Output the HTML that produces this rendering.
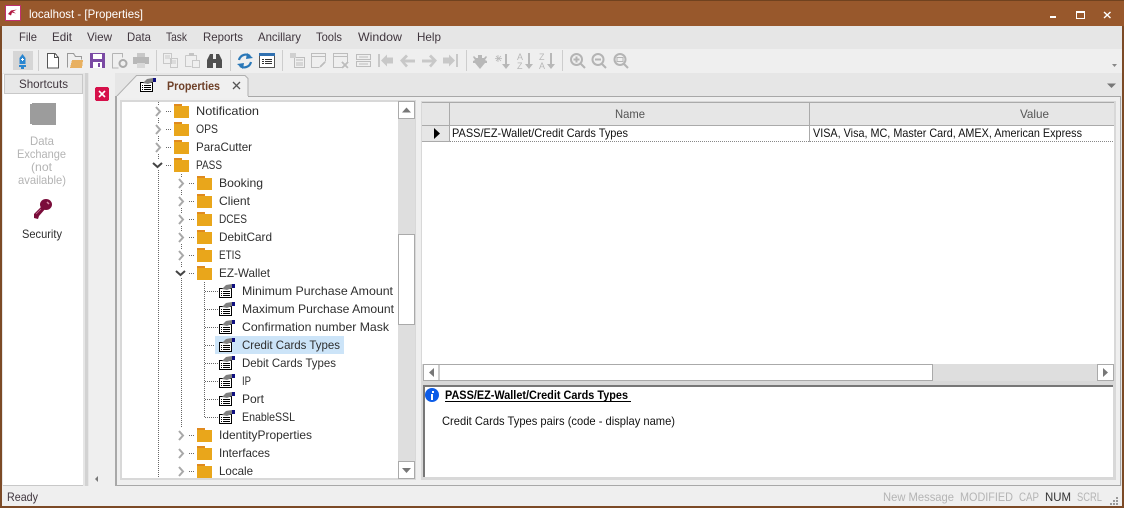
<!DOCTYPE html>
<html><head><meta charset="utf-8"><title>localhost - [Properties]</title>
<style>
html,body{margin:0;padding:0;background:#e6e6e6;overflow:hidden}
svg{display:block;font-family:"Liberation Sans",sans-serif;font-size:12px}
.d{fill:#2e2e2e}.g{fill:#b4b4b4}.m{fill:#40363e}
</style></head><body>
<svg width="1124" height="508" viewBox="0 0 1124 508" xmlns="http://www.w3.org/2000/svg" shape-rendering="crispEdges">
<defs>
<g id="fo"><rect x="0" y="0" width="8" height="3" fill="#e08a1e"/><rect x="0" y="2" width="15" height="12" fill="#e9a61b"/></g>
<g id="ar"><path d="M0 0l4 4.500-4 4.500" fill="none" stroke="#a8a8a8" stroke-width="2" shape-rendering="auto"/></g>
<g id="dn"><path d="M0 0l4.500 4 4.500-4" fill="none" stroke="#444" stroke-width="2" shape-rendering="auto"/></g>
<g id="pr">
<rect x="0.500" y="4.500" width="12" height="9" fill="#fff" stroke="#000"/>
<rect x="2" y="7" width="1" height="1" fill="#000"/><rect x="4" y="7" width="7" height="1" fill="#000"/>
<rect x="2" y="9" width="1" height="1" fill="#000"/><rect x="4" y="9" width="7" height="1" fill="#000"/>
<rect x="2" y="11" width="1" height="1" fill="#000"/><rect x="4" y="11" width="7" height="1" fill="#000"/>
<path d="M3 5l4-4 6-1v4l-5 2z" fill="#808080" shape-rendering="auto"/>
<rect x="13" y="0" width="3" height="4" fill="#101080"/>
</g>
</defs>

<!-- frame -->
<rect width="1124" height="508" fill="#e6e6e6"/>
<rect width="1124" height="26" fill="#98582c"/>
<rect width="1124" height="1" fill="#70421f"/>
<rect x="0" y="26" width="2" height="482" fill="#7c4a26"/>
<rect x="1122" y="26" width="2" height="482" fill="#7c4a26"/>
<rect x="0" y="506" width="1124" height="2" fill="#7c4a26"/>

<!-- title -->
<rect x="5.500" y="5.500" width="15" height="15" fill="#fff" stroke="#c03070" stroke-width="1"/>
<path d="M8 14l3-3.500 6-1-4 2 3 2-4-1-1 3z" fill="#b01840" shape-rendering="auto"/>
<text x="29" y="18" fill="#fff" textLength="114" lengthAdjust="spacingAndGlyphs">localhost - [Properties]</text>
<rect x="1050" y="16" width="6" height="2" fill="#fff"/>
<rect x="1076.500" y="11.500" width="8" height="7" fill="none" stroke="#fff"/><rect x="1076" y="11" width="9" height="2" fill="#fff"/>
<path d="M1104 12l6.500 6M1110.500 12l-6.500 6" stroke="#fff" stroke-width="1.400" shape-rendering="auto"/>

<!-- menu -->
<g class="m">
<text x="19" y="41" textLength="18" lengthAdjust="spacingAndGlyphs">File</text>
<text x="52" y="41" textLength="20" lengthAdjust="spacingAndGlyphs">Edit</text>
<text x="87" y="41" textLength="25" lengthAdjust="spacingAndGlyphs">View</text>
<text x="127" y="41" textLength="24" lengthAdjust="spacingAndGlyphs">Data</text>
<text x="166" y="41" textLength="21" lengthAdjust="spacingAndGlyphs">Task</text>
<text x="203" y="41" textLength="40" lengthAdjust="spacingAndGlyphs">Reports</text>
<text x="258" y="41" textLength="43" lengthAdjust="spacingAndGlyphs">Ancillary</text>
<text x="316" y="41" textLength="26" lengthAdjust="spacingAndGlyphs">Tools</text>
<text x="358" y="41" textLength="44" lengthAdjust="spacingAndGlyphs">Window</text>
<text x="417" y="41" textLength="24" lengthAdjust="spacingAndGlyphs">Help</text>
</g>

<!-- toolbar -->
<rect x="2" y="49" width="1120" height="24" fill="#efefef"/>
<rect x="13" y="51" width="20" height="19" fill="#d6d6d6"/>
<path d="M22.500 54l3 4v6h-6v-6zM19 65h7v2h-2v2h-3v-2h-2z" fill="#2a86d0" shape-rendering="auto"/><rect x="21" y="59" width="3" height="1" fill="#fff"/><rect x="22" y="58" width="1" height="3" fill="#fff"/>
<g fill="#cdcdcd"><rect x="38" y="50" width="1" height="21"/><rect x="156" y="50" width="1" height="21"/><rect x="230" y="50" width="1" height="21"/><rect x="282" y="50" width="1" height="21"/><rect x="466" y="50" width="1" height="21"/><rect x="562" y="50" width="1" height="21"/></g>
<path d="M47.500 53.500h7.500l3.500 4v10.500h-11z" fill="#fff" stroke="#555"/><path d="M54.500 53.500v4h4" fill="none" stroke="#555"/>
<path d="M67.500 67.500v-14h6l2 3h6v3" fill="none" stroke="#999"/><path d="M70 68l2-8h11l-1 8z" fill="#e8b060"/>
<rect x="90" y="53" width="15" height="15" fill="#7b4aa4"/><rect x="93" y="54" width="9" height="5" fill="#fff"/><rect x="93" y="62" width="9" height="6" fill="#fff"/><rect x="98" y="63" width="2" height="4" fill="#7b4aa4"/>
<path d="M112.500 53.500h10v4M112.500 53.500v14.500h6" fill="none" stroke="#b4b4b4"/><circle cx="123" cy="63.500" r="3.500" fill="none" stroke="#aaa" stroke-width="2" shape-rendering="auto"/>
<rect x="137" y="53" width="8" height="4" fill="#c8c8c8"/><rect x="133" y="57" width="16" height="7" fill="#b8b8b8"/><rect x="137" y="63" width="8" height="5" fill="#d8d8d8"/>
<g fill="none" stroke="#c8c8c8"><path d="M163.500 53.500h8v10h-8zM170.500 58.500h7v9h-7zM165 56h5M165 58h5M172 61h4M172 63h4"/><path d="M185.500 55.500h11v5M185.500 55.500v11h6M192.500 60.500h7v7h-7z"/></g><rect x="189" y="53" width="5" height="3" fill="#c4c4c4"/>
<path d="M207 68v-8l3-6h3v5h3v-5h3l3 6v8h-6v-5h-3v5z" fill="#505050"/><rect x="213" y="60" width="3" height="3" fill="#505050"/>
<g fill="none" stroke="#2a78b8" stroke-width="2.200" shape-rendering="auto"><path d="M239 60a7 7 0 0 1 11-4"/><path d="M251 62a7 7 0 0 1-11 4"/></g><path d="M247 53l6 5-7 1zM243 69l-6-5 7-1z" fill="#2a78b8" shape-rendering="auto"/>
<rect x="259.500" y="53.500" width="15" height="14" fill="#fff" stroke="#555"/><rect x="259" y="53" width="16" height="3" fill="#3070b0"/><g fill="#333"><rect x="262" y="59" width="2" height="1"/><rect x="265" y="59" width="7" height="1"/><rect x="262" y="61" width="2" height="1"/><rect x="265" y="61" width="7" height="1"/><rect x="262" y="63" width="2" height="1"/><rect x="265" y="63" width="7" height="1"/></g>
<g fill="none" stroke="#bdbdbd">
<path d="M294.500 57.500h10v10h-10zM296 60h7M296 63h7M296 65h7"/><rect x="290" y="53" width="6" height="5" fill="#d0d0d0" stroke="none"/>
<path d="M311.500 53.500h14v3h-14zM311.500 56.500v11h8M325.500 56.500v5"/><path d="M320 67l5-5" stroke-width="2"/>
<path d="M333.500 53.500h14v3h-14zM333.500 56.500v11h9M347.500 56.500v5"/><path d="M342 62l6 6M348 62l-6 6" stroke-width="2"/>
<path d="M356.500 54.500h14v5h-14zM356.500 61.500h14v5h-14zM359 57h9M359 64h9"/>
</g>
<g fill="#c8c8c8" shape-rendering="auto">
<path d="M378 54h2v13h-2zM381 60.500l6-6v3h6v6h-6v3z"/>
<path d="M400 60.500l6-6 2 2-3 3h10v3h-10l3 3-2 2z"/>
<path d="M437 60.500l-6-6-2 2 3 3h-10v3h10l-3 3 2 2z"/>
<path d="M458 54h-2v13h2zM455 60.500l-6-6v3h-6v6h6v3z"/>
</g>
<g fill="#b8b8b8" shape-rendering="auto">
<path d="M480 55h2v3h2l2-2 1 1-2 3 2 1v2l-2 0-5 6-5-6-2 0v-2l2-1-2-3 1-1 2 2h2v-3z"/>
<path d="M505 54h2v10h3l-4 5-4-5h3z"/><path d="M498 55v7M495 58.500h7M496 56l5 5M501 56l-5 5" stroke="#b8b8b8" stroke-width=".8" fill="none"/>
<path d="M528 53h2v11h3l-4 5-4-5h3z"/>
<path d="M550 53h2v11h3l-4 5-4-5h3z"/>
</g>
<g fill="#b8b8b8" style="font-size:9px">
<text x="517" y="60">A</text><text x="517" y="69">Z</text>
<text x="539" y="60">Z</text><text x="539" y="69">A</text>
</g>
<g fill="none" stroke="#b4b4b4" stroke-width="2" shape-rendering="auto">
<circle cx="576.500" cy="59.500" r="5.500"/><path d="M581 64l4 4M573.500 59.500h6M576.500 56.500v6"/>
<circle cx="598" cy="59.500" r="5.500"/><path d="M602 64l4 4M595 59.500h6"/>
<circle cx="620" cy="59.500" r="5.500"/><path d="M624 64l4 4"/><rect x="617" y="57.500" width="6" height="4" stroke-width="1"/>
</g>
<path d="M1112 64h5l-2.500 3z" fill="#888" shape-rendering="auto"/>

<!-- left pane -->
<rect x="3" y="74" width="80" height="411" fill="#fff"/>
<rect x="4.500" y="74.500" width="78" height="19" fill="#e8e8e8" stroke="#c8c8c8"/>
<text x="19" y="88" class="m" textLength="49" lengthAdjust="spacingAndGlyphs">Shortcuts</text>
<rect x="3" y="485" width="80" height="1" fill="#c8c8c8"/>
<path d="M32 103h24v22h-24v-1h-2v-20h2z" fill="#9c9c9c"/>
<g fill="#b4b4b4">
<text x="30" y="145" textLength="24" lengthAdjust="spacingAndGlyphs">Data</text>
<text x="17" y="158" textLength="49" lengthAdjust="spacingAndGlyphs">Exchange</text>
<text x="31" y="171" textLength="21" lengthAdjust="spacingAndGlyphs">(not</text>
<text x="18" y="184" textLength="48" lengthAdjust="spacingAndGlyphs">available)</text>
</g>
<g shape-rendering="auto">
<ellipse cx="46" cy="204.500" rx="6" ry="5.500" fill="#7a0c3a"/>
<path d="M43 205l3 3-7 8-1 3-4-1 0-4z" fill="#7a0c3a"/>
<path d="M47 202l2 2" stroke="#d890a8" stroke-width="1.500"/>
<path d="M36 214l5-5" stroke="#c07090" stroke-width=".8"/>
</g>
<text x="22" y="238" class="d" textLength="40" lengthAdjust="spacingAndGlyphs">Security</text>
<rect x="85" y="73" width="3" height="413" fill="#d2d2d2"/>
<rect x="89" y="73" width="26" height="413" fill="#efefef"/>
<rect x="95" y="87" width="14" height="14" rx="2" fill="#d6104a"/>
<path d="M99 91l6 6M105 91l-6 6" stroke="#fff" stroke-width="1.600" shape-rendering="auto"/>
<path d="M98 476v6l-3-3z" fill="#777" shape-rendering="auto"/>

<!-- tab strip -->
<rect x="115" y="96" width="1005" height="1" fill="#a8a8a8"/>
<path d="M116 97L136.500 75.500H245l3 3V97z" fill="#f0f0f0" stroke="#b0b0b0" shape-rendering="auto"/>
<use href="#pr" x="140" y="78"/>
<text x="167" y="90" fill="#6e4028" font-weight="bold" textLength="53" lengthAdjust="spacingAndGlyphs">Properties</text>
<path d="M233 82l7 7M240 82l-7 7" stroke="#555" stroke-width="1.300" shape-rendering="auto"/>
<path d="M1107 83.500h9l-4.500 4.500z" fill="#777" shape-rendering="auto"/>

<!-- content frame -->
<rect x="115" y="96" width="1006" height="390" fill="#efefef"/>
<rect x="115" y="96" width="2" height="390" fill="#a8a8a8"/>
<rect x="115" y="96" width="1006" height="1" fill="#a8a8a8"/>
<rect x="115" y="485" width="1006" height="1" fill="#a8a8a8"/>
<rect x="1120" y="96" width="1" height="390" fill="#a8a8a8"/>
<rect x="120" y="100" width="296" height="380" fill="#d8d8d8"/>
<rect x="122" y="102" width="276" height="376" fill="#fff"/>
<rect x="117" y="96" width="131" height="2" fill="#f0f0f0"/>

<!-- tree scrollbar -->
<rect x="398" y="101" width="17" height="378" fill="#dedede"/>
<rect x="398.500" y="234.500" width="16" height="90" fill="#fff" stroke="#aaa"/>
<rect x="398.500" y="101.500" width="16" height="17" fill="#fff" stroke="#aaa"/>
<rect x="398.500" y="461.500" width="16" height="17" fill="#fff" stroke="#aaa"/>
<path d="M402 112.500h9l-4.500-5z" fill="#777" shape-rendering="auto"/>
<path d="M402 468h9l-4.500 5z" fill="#777" shape-rendering="auto"/>

<!-- tree lines -->
<g stroke="#666" stroke-dasharray="1 1" fill="none">
<path d="M158.500 102v376"/>
<path d="M181.500 174v253"/>
<path d="M204.500 282v135"/>
<path d="M166 111.500h6M166 129.500h6M166 147.500h6M166 165.500h6"/>
<path d="M189 183.500h6M189 201.500h6M189 219.500h6M189 237.500h6M189 255.500h6M189 273.500h6M189 435.500h6M189 453.500h6M189 471.500h6"/>
<path d="M205 291.500h13M205 309.500h13M205 327.500h13M205 345.500h13M205 363.500h13M205 381.500h13M205 399.500h13M205 417.500h13"/>
</g>
<g fill="#fff"><rect x="153" y="105" width="10" height="12"/><rect x="153" y="123" width="10" height="12"/><rect x="153" y="141" width="10" height="12"/><rect x="153" y="160" width="10" height="10"/><rect x="176" y="177" width="10" height="12"/><rect x="176" y="195" width="10" height="12"/><rect x="176" y="213" width="10" height="12"/><rect x="176" y="231" width="10" height="12"/><rect x="176" y="249" width="10" height="12"/><rect x="176" y="268" width="10" height="10"/><rect x="176" y="429" width="10" height="12"/><rect x="176" y="447" width="10" height="12"/><rect x="176" y="465" width="10" height="12"/></g>
<use href="#ar" x="156" y="107"/><use href="#ar" x="156" y="125"/><use href="#ar" x="156" y="143"/><use href="#dn" x="153" y="163"/>
<use href="#ar" x="179" y="179"/><use href="#ar" x="179" y="197"/><use href="#ar" x="179" y="215"/><use href="#ar" x="179" y="233"/><use href="#ar" x="179" y="251"/><use href="#dn" x="176" y="271"/>
<use href="#ar" x="179" y="431"/><use href="#ar" x="179" y="449"/><use href="#ar" x="179" y="467"/>

<use href="#fo" x="174" y="104"/><use href="#fo" x="174" y="122"/><use href="#fo" x="174" y="140"/><use href="#fo" x="174" y="158"/>
<use href="#fo" x="197" y="176"/><use href="#fo" x="197" y="194"/><use href="#fo" x="197" y="212"/><use href="#fo" x="197" y="230"/><use href="#fo" x="197" y="248"/><use href="#fo" x="197" y="266"/>
<use href="#fo" x="197" y="428"/><use href="#fo" x="197" y="446"/><use href="#fo" x="197" y="464"/>

<rect x="215" y="336" width="129" height="18" fill="#cce4f8"/>
<use href="#pr" x="219" y="284"/><use href="#pr" x="219" y="302"/><use href="#pr" x="219" y="320"/><use href="#pr" x="219" y="338"/><use href="#pr" x="219" y="356"/><use href="#pr" x="219" y="374"/><use href="#pr" x="219" y="392"/><use href="#pr" x="219" y="410"/>

<g class="d">
<text x="196" y="115" textLength="63" lengthAdjust="spacingAndGlyphs">Notification</text>
<text x="196" y="133" textLength="22" lengthAdjust="spacingAndGlyphs">OPS</text>
<text x="196" y="151" textLength="56" lengthAdjust="spacingAndGlyphs">ParaCutter</text>
<text x="196" y="169" textLength="26" lengthAdjust="spacingAndGlyphs">PASS</text>
<text x="219" y="187" textLength="44" lengthAdjust="spacingAndGlyphs">Booking</text>
<text x="219" y="205" textLength="31" lengthAdjust="spacingAndGlyphs">Client</text>
<text x="219" y="223" textLength="28" lengthAdjust="spacingAndGlyphs">DCES</text>
<text x="219" y="241" textLength="53" lengthAdjust="spacingAndGlyphs">DebitCard</text>
<text x="219" y="259" textLength="22" lengthAdjust="spacingAndGlyphs">ETIS</text>
<text x="219" y="277" textLength="51" lengthAdjust="spacingAndGlyphs">EZ-Wallet</text>
<text x="242" y="295" textLength="151" lengthAdjust="spacingAndGlyphs">Minimum Purchase Amount</text>
<text x="242" y="313" textLength="152" lengthAdjust="spacingAndGlyphs">Maximum Purchase Amount</text>
<text x="242" y="331" textLength="147" lengthAdjust="spacingAndGlyphs">Confirmation number Mask</text>
<text x="242" y="349" textLength="98" lengthAdjust="spacingAndGlyphs">Credit Cards Types</text>
<text x="242" y="367" textLength="94" lengthAdjust="spacingAndGlyphs">Debit Cards Types</text>
<text x="242" y="385" textLength="9" lengthAdjust="spacingAndGlyphs">IP</text>
<text x="242" y="403" textLength="22" lengthAdjust="spacingAndGlyphs">Port</text>
<text x="242" y="421" textLength="53" lengthAdjust="spacingAndGlyphs">EnableSSL</text>
<text x="219" y="439" textLength="93" lengthAdjust="spacingAndGlyphs">IdentityProperties</text>
<text x="219" y="457" textLength="51" lengthAdjust="spacingAndGlyphs">Interfaces</text>
<text x="219" y="475" textLength="34" lengthAdjust="spacingAndGlyphs">Locale</text>
</g>

<!-- grid -->
<rect x="421" y="101" width="695" height="282" fill="#d8d8d8"/>
<rect x="422" y="102" width="692" height="279" fill="#fff"/>
<rect x="422" y="102" width="692" height="24" fill="#e6e6e6"/>
<rect x="422" y="125" width="692" height="1" fill="#aaa"/>
<rect x="422" y="102" width="692" height="1" fill="#aaa"/>
<rect x="449" y="102" width="1" height="40" fill="#aaa"/>
<rect x="809" y="102" width="1" height="40" fill="#aaa"/>
<rect x="422" y="126" width="27" height="15" fill="#e6e6e6"/>
<rect x="422" y="141" width="28" height="1" fill="#aaa"/>
<path d="M450 141.500H1114" stroke="#888" stroke-dasharray="1 1"/>
<path d="M434 128l6 5.500-6 5.500z" fill="#000" shape-rendering="auto"/>
<text x="615" y="118" fill="#555" textLength="30" lengthAdjust="spacingAndGlyphs">Name</text>
<text x="1020" y="118" fill="#555" textLength="29" lengthAdjust="spacingAndGlyphs">Value</text>
<text x="452" y="137" fill="#111" textLength="176" lengthAdjust="spacingAndGlyphs">PASS/EZ-Wallet/Credit Cards Types</text>
<text x="813" y="137" fill="#111" textLength="269" lengthAdjust="spacingAndGlyphs">VISA, Visa, MC, Master Card, AMEX, American Express</text>

<!-- h scroll -->
<rect x="422" y="364" width="692" height="17" fill="#dedede"/>
<rect x="423.500" y="364.500" width="509" height="16" fill="#fff" stroke="#aaa"/>
<rect x="423.500" y="364.500" width="15" height="16" fill="#fff" stroke="#aaa"/>
<rect x="438" y="365" width="2" height="15" fill="#ccc"/>
<rect x="1097.500" y="364.500" width="16" height="16" fill="#fff" stroke="#aaa"/>
<path d="M434 368v9l-5-4.500z" fill="#777" shape-rendering="auto"/>
<path d="M1103 368v9l5-4.500z" fill="#777" shape-rendering="auto"/>

<!-- info panel -->
<rect x="421" y="383" width="695" height="97" fill="#d8d8d8"/>
<rect x="423" y="386" width="690" height="91" fill="#fff"/>
<rect x="423" y="385" width="690" height="2" fill="#777"/>
<rect x="423" y="385" width="2" height="92" fill="#777"/>
<circle cx="432" cy="395" r="7" fill="#0c5ce8" shape-rendering="auto"/>
<rect x="431" y="394" width="2" height="6" fill="#fff"/><rect x="432" y="391" width="2" height="2" fill="#fff"/>
<text x="445" y="399" fill="#000" font-weight="bold" textLength="183" lengthAdjust="spacingAndGlyphs">PASS/EZ-Wallet/Credit Cards Types</text>
<rect x="445" y="401" width="186" height="1" fill="#000"/>
<text x="442" y="425" fill="#111" textLength="233" lengthAdjust="spacingAndGlyphs">Credit Cards Types pairs (code - display name)</text>

<!-- status -->
<rect x="2" y="486" width="1120" height="20" fill="#efefef"/>
<text x="7" y="501" class="m" textLength="31" lengthAdjust="spacingAndGlyphs">Ready</text>
<g fill="#b4b4b4">
<text x="883" y="501" textLength="71" lengthAdjust="spacingAndGlyphs">New Message</text>
<text x="960" y="501" textLength="53" lengthAdjust="spacingAndGlyphs">MODIFIED</text>
<text x="1019" y="501" textLength="20" lengthAdjust="spacingAndGlyphs">CAP</text>
<text x="1077" y="501" textLength="25" lengthAdjust="spacingAndGlyphs">SCRL</text>
</g>
<text x="1045" y="501" fill="#333" textLength="26" lengthAdjust="spacingAndGlyphs">NUM</text>
<g fill="#999"><rect x="1116" y="497" width="2" height="2"/><rect x="1113" y="500" width="2" height="2"/><rect x="1116" y="500" width="2" height="2"/><rect x="1110" y="503" width="2" height="2"/><rect x="1113" y="503" width="2" height="2"/><rect x="1116" y="503" width="2" height="2"/></g>
</svg>
</body></html>
